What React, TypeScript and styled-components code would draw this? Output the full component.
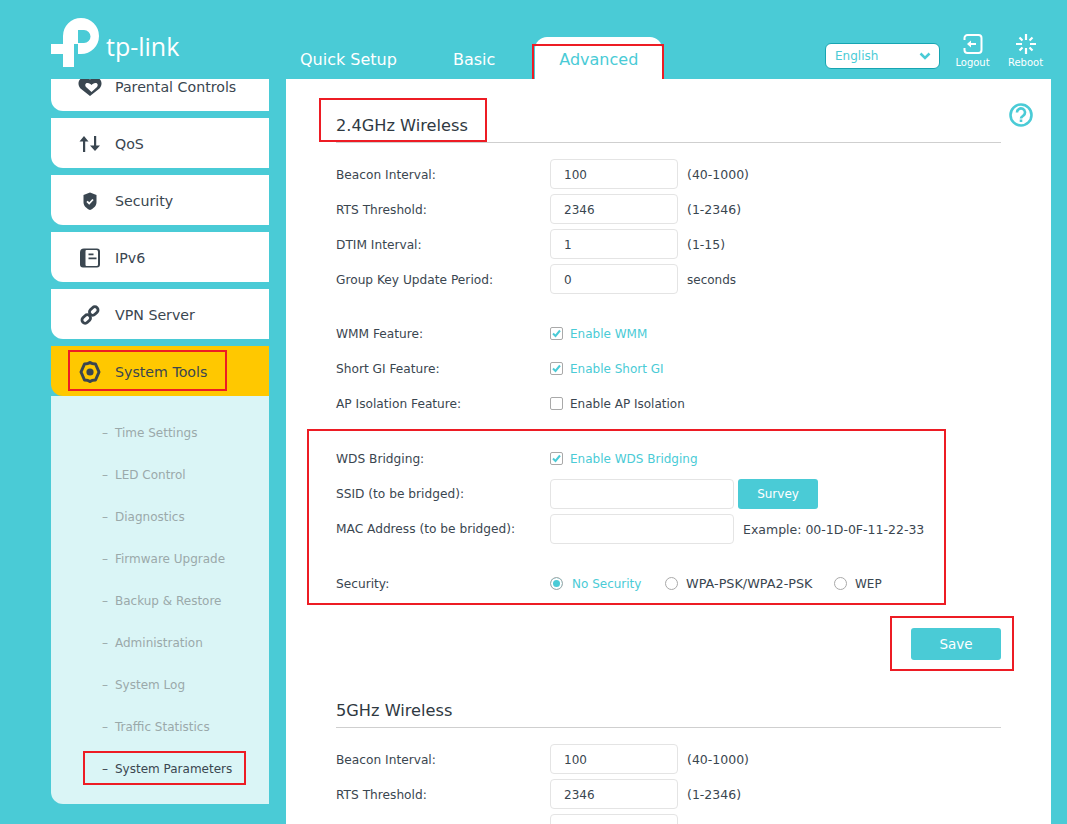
import React from 'react';
import styled, { createGlobalStyle } from 'styled-components';

const TEAL = '#4acbd6';
const INK = '#3a4650';

const GlobalStyle = createGlobalStyle`
  html, body, #root {
    margin: 0;
    height: 100%;
  }
  body {
    background: ${TEAL};
    font-family: "DejaVu Sans", Verdana, sans-serif;
    overflow: hidden;
  }
`;

const menu = ['Parental Controls', 'QoS', 'Security', 'IPv6', 'VPN Server'];
const subMenu = [
  'Time Settings',
  'LED Control',
  'Diagnostics',
  'Firmware Upgrade',
  'Backup & Restore',
  'Administration',
  'System Log',
  'Traffic Statistics',
  'System Parameters',
];

function MenuIcon({ name }: { name: string }) {
  switch (name) {
    case 'Parental Controls':
      return (
        <svg width="24" height="24" viewBox="0 0 24 24">
          <path fill={INK} d="M12 21 2.500 13.500C-.5 10.500 0 5.500 3 3.500c3-2 6-1 9 1 3-2 6-3 9-1 3 2 3.500 7 .5 10z" />
          <path fill="#fff" d="M13.500 17 8 12C6.500 10 7.500 8 9.500 8c2 0 3 1 4 2 1-1 2-2 4-2 2 0 3 2 1.500 4z" />
        </svg>
      );
    case 'QoS':
      return (
        <svg width="24" height="24" viewBox="0 0 24 24">
          <path fill={INK} d="M6 4 10.500 9.500H7.200V20H5V9.500H1.500z" />
          <path fill={INK} d="M16 4h2.200v9.500h3.800l-5 5.500-5-5.500h4z" />
        </svg>
      );
    case 'Security':
      return (
        <svg width="24" height="24" viewBox="0 0 24 24">
          <path fill={INK} d="M12 3.500 18.500 6v7c0 4-3 6.500-6.500 8-3.500-1.500-6.500-4-6.500-8V6z" />
          <path fill="none" stroke="#fff" strokeWidth="1.800" d="M9 12.300l2.200 2.200L15 10.500" />
        </svg>
      );
    case 'IPv6':
      return (
        <svg width="24" height="24" viewBox="0 0 24 24">
          <path fill={INK} d="M6 2.500h13a3 3 0 0 1 3 3v13a3 3 0 0 1-3 3H5a3 3 0 0 1-3-3V6.500a4 4 0 0 1 4-4z" />
          <path fill="#fff" d="M7.500 5a1 1 0 0 1 1-1h10a1.500 1.500 0 0 1 1.500 1.500v13a1.500 1.500 0 0 1-1.500 1.500h-10a1 1 0 0 1-1-1z" />
          <path fill={INK} d="M10.500 7.500h5v1.800h-5zM10.500 11.500h8v1.800h-8z" />
        </svg>
      );
    case 'VPN Server':
      return (
        <svg width="24" height="24" viewBox="0 0 24 24" fill="none" stroke={INK} strokeWidth="2.800">
          <rect x="3.500" y="12.800" width="9.500" height="6.400" rx="3.200" transform="rotate(-45 8.250 16)" />
          <rect x="11" y="4.800" width="9.500" height="6.400" rx="3.200" transform="rotate(-45 15.750 8)" />
        </svg>
      );
    default:
      return (
        <svg width="24" height="24" viewBox="0 0 24 24">
          <path fill="none" stroke={INK} strokeWidth="3" strokeLinejoin="round" d="M12 2.500c2 1.500 3 1.500 5.500 1.500L21 12l-3.500 8c-2.500 0-3.500 0-5.500 1.500-2-1.500-3-1.500-5.500-1.500L3 12l3.500-8C9 4 10 4 12 2.500z" />
          <circle cx="12" cy="12" r="3.600" fill={INK} />
        </svg>
      );
  }
}

function Check() {
  return (
    <svg width="9" height="9" viewBox="0 0 9 9">
      <path fill="none" stroke={TEAL} strokeWidth="2" d="M1 4.500 3.500 7 8 1.500" />
    </svg>
  );
}

function Field({ label, value, hint, hintSize }: { label: string; value: string; hint: string; hintSize?: number }) {
  return (
    <Row>
      <Label>{label}</Label>
      <TextInput defaultValue={value} />
      <Hint $size={hintSize}>{hint}</Hint>
    </Row>
  );
}

function Toggle({ label, text, on }: { label: string; text: string; on?: boolean }) {
  return (
    <Row>
      <Label>{label}</Label>
      <CheckBox>{on && <Check />}</CheckBox>
      <OptionText $on={on}>{text}</OptionText>
    </Row>
  );
}

function RadioOption({ text, on, width, size }: { text: string; on?: boolean; width: number; size?: number }) {
  return (
    <RadioWrap $width={width} $on={on}>
      <Radio $on={on} />
      <OptionText $on={on} $size={size}>{text}</OptionText>
    </RadioWrap>
  );
}

export default function App() {
  return (
    <Page>
      <GlobalStyle />
      <Header>
        <Logo>
          <svg width="50" height="51" viewBox="0 0 50 51">
            <path
              fill="#fff"
              fillRule="evenodd"
              d="M27 37h3A18 18 0 1 0 12 19v8H0v10h12v13h11V27h4zM27 13h6a6.500 6.500 0 0 1 0 13h-6z"
            />
          </svg>
          <LogoWord>tp-link</LogoWord>
        </Logo>
        <Tabs>
          <Tab>Quick Setup</Tab>
          <Tab>Basic</Tab>
          <Tab $active>
            Advanced
            <Mark $top={7} $left={-3} $width={132} $height={38} />
          </Tab>
        </Tabs>
        <Tools>
          <LangSelect>
            English
            <svg width="12" height="8" viewBox="0 0 12 8">
              <path fill="none" stroke={TEAL} strokeWidth="2.500" d="M1.500 1.500 6 6l4.500-4.500" />
            </svg>
          </LangSelect>
          <ToolButton>
            <svg width="20" height="20" viewBox="0 0 20 20" fill="none" stroke="#fff" strokeWidth="2">
              <path d="M1.500 6V4a3 3 0 0 1 3-3h11a3 3 0 0 1 3 3v12a3 3 0 0 1-3 3h-11a3 3 0 0 1-3-3v-2" />
              <path d="M13 10H8" />
              <path fill="#fff" stroke="none" d="M4 10l4-3.500v7z" />
            </svg>
            Logout
          </ToolButton>
          <ToolButton>
            <svg width="20" height="20" viewBox="0 0 20 20" fill="none" stroke="#fff" strokeWidth="2.200">
              <path d="M10 0v6M10 14v6M0 10h6M14 10h6M3.500 3.500l3 3M13.500 13.500l3 3M16.500 3.500l-3 3M6.500 13.500l-3 3" />
            </svg>
            Reboot
          </ToolButton>
        </Tools>
      </Header>
      <Body>
        <Sidebar>
          <MenuList>
            {menu.map((item) => (
              <MenuItem key={item}>
                <IconSlot>
                  <MenuIcon name={item} />
                </IconSlot>
                {item}
              </MenuItem>
            ))}
            <div>
              <MenuItem $active>
                <IconSlot>
                  <MenuIcon name="System Tools" />
                </IconSlot>
                System Tools
                <Mark $top={4} $left={17} $width={159} $height={41} />
              </MenuItem>
              <SubMenu>
                {subMenu.map((item) => {
                  const active = item === 'System Parameters';
                  return (
                    <SubItem key={item} $active={active}>
                      <Dash>–</Dash>
                      {item}
                      {active && <Mark $top={3} $left={32} $width={163} $height={34} />}
                    </SubItem>
                  );
                })}
              </SubMenu>
            </div>
          </MenuList>
        </Sidebar>
        <Main>
          <HelpIcon>
            <svg width="24" height="24" viewBox="0 0 24 24" fill="none" stroke={TEAL}>
              <circle cx="12" cy="12" r="10.500" strokeWidth="2.600" />
              <path strokeWidth="2.600" d="M8 9.500a4 4 0 1 1 6.500 3c-1.500 1.200-2.500 1.500-2.500 3" />
              <path strokeWidth="2.600" d="M12 16.500v2.500" />
            </svg>
          </HelpIcon>
          <SectionTitle>
            2.4GHz Wireless
            <Mark $top={19} $left={-17} $width={168} $height={44} />
          </SectionTitle>
          <Rows>
            <Field label="Beacon Interval:" value="100" hint="(40-1000)" />
            <Field label="RTS Threshold:" value="2346" hint="(1-2346)" />
            <Field label="DTIM Interval:" value="1" hint="(1-15)" />
            <Field label="Group Key Update Period:" value="0" hint="seconds" hintSize={12} />
          </Rows>
          <Rows $gap={19}>
            <Toggle label="WMM Feature:" text="Enable WMM" on />
            <Toggle label="Short GI Feature:" text="Enable Short GI" on />
            <Toggle label="AP Isolation Feature:" text="Enable AP Isolation" />
          </Rows>
          <BridgeGroup>
            <Mark $top={-12} $left={-29} $width={639} $height={176} />
            <Toggle label="WDS Bridging:" text="Enable WDS Bridging" on />
            <WideRow>
              <Label>SSID (to be bridged):</Label>
              <TextInput $wide />
              <SurveyButton>Survey</SurveyButton>
            </WideRow>
            <WideRow>
              <Label>MAC Address (to be bridged):</Label>
              <TextInput $wide />
              <Hint>Example: 00-1D-0F-11-22-33</Hint>
            </WideRow>
            <SecurityRow>
              <Label>Security:</Label>
              <RadioOption text="No Security" on width={115} />
              <RadioOption text="WPA-PSK/WPA2-PSK" width={169} size={12.8} />
              <RadioOption text="WEP" width={60} />
            </SecurityRow>
          </BridgeGroup>
          <SaveBar>
            <SaveButton>
              Save
              <Mark $top={-12} $left={-21} $width={124} $height={55} />
            </SaveButton>
          </SaveBar>
          <SectionTitle $second>5GHz Wireless</SectionTitle>
          <Rows>
            <Field label="Beacon Interval:" value="100" hint="(40-1000)" />
            <Field label="RTS Threshold:" value="2346" hint="(1-2346)" />
            <Row>
              <Label />
              <TextInput />
            </Row>
          </Rows>
        </Main>
      </Body>
    </Page>
  );
}

const Page = styled.div`
  height: 824px;
  overflow: hidden;
  display: flex;
  flex-direction: column;
`;

const Mark = styled.i<{ $top: number; $left: number; $width: number; $height: number }>`
  position: absolute;
  top: ${(p) => p.$top}px;
  left: ${(p) => p.$left}px;
  width: ${(p) => p.$width}px;
  height: ${(p) => p.$height}px;
  box-sizing: border-box;
  border: 2px solid #ed1c24;
  pointer-events: none;
`;

const Header = styled.header`
  height: 79px;
  flex: none;
  display: flex;
  align-items: flex-end;
  position: relative;
  padding: 0 15px 0 51px;
`;

const Logo = styled.div`
  width: 233px;
  align-self: flex-start;
  padding-top: 17px;
  display: flex;
  align-items: flex-start;
  color: #fff;
`;

const LogoWord = styled.span`
  font-family: "Open Sans", sans-serif;
  font-size: 25px;
  line-height: 30px;
  margin: 14px 0 0 5px;
`;

const Tabs = styled.nav`
  display: flex;
  gap: 24px;
`;

const Tab = styled.div<{ $active?: boolean }>`
  position: relative;
  height: 42px;
  line-height: 45px;
  padding: 0 ${(p) => (p.$active ? 24 : 16)}px;
  border-radius: 12px 12px 0 0;
  font-size: 16px;
  color: ${(p) => (p.$active ? TEAL : '#fff')};
  background: ${(p) => (p.$active ? '#fff' : 'transparent')};
`;

const Tools = styled.div`
  margin-left: auto;
  align-self: flex-start;
  padding-top: 34px;
  display: flex;
  align-items: flex-start;
`;

const LangSelect = styled.div`
  width: 115px;
  height: 26px;
  margin-top: 9px;
  margin-right: 6px;
  box-sizing: border-box;
  padding: 0 8px 0 9px;
  display: flex;
  align-items: center;
  justify-content: space-between;
  background: #fff;
  border: 1px solid #17a5b2;
  border-radius: 6px;
  color: ${TEAL};
  font-size: 12px;
`;

const ToolButton = styled.div`
  width: 53px;
  display: flex;
  flex-direction: column;
  align-items: center;
  gap: 3px;
  color: #fff;
  font-size: 10px;
`;

const Body = styled.div`
  flex: 1;
  display: flex;
  gap: 17px;
  padding-left: 51px;
  min-height: 0;
`;

const Sidebar = styled.aside`
  width: 218px;
  flex: none;
  overflow: hidden;
`;

const MenuList = styled.div`
  margin-top: -18px;
  display: flex;
  flex-direction: column;
  gap: 7px;
`;

const MenuItem = styled.div<{ $active?: boolean }>`
  position: relative;
  height: 50px;
  box-sizing: border-box;
  display: flex;
  align-items: center;
  padding: 2px 0 0 27px;
  border-radius: 0 0 0 12px;
  font-size: 14.200px;
  color: ${INK};
  background: ${(p) => (p.$active ? '#ffc800' : '#fff')};
`;

const IconSlot = styled.span`
  width: 24px;
  height: 24px;
  margin-right: 13px;
  display: flex;
`;

const SubMenu = styled.ul`
  list-style: none;
  margin: 0;
  padding: 16px 0 14px;
  background: #daf5f6;
  border-radius: 0 0 0 12px;
`;

const SubItem = styled.li<{ $active?: boolean }>`
  position: relative;
  height: 42px;
  display: flex;
  align-items: center;
  padding-left: 64px;
  font-size: 12px;
  color: ${(p) => (p.$active ? INK : '#9aa9aa')};
`;

const Dash = styled.span`
  position: absolute;
  left: 51px;
  font-size: 12px;
`;

const Main = styled.main`
  position: relative;
  width: 765px;
  flex: none;
  box-sizing: border-box;
  padding: 0 50px;
  background: #fff;
`;

const HelpIcon = styled.span`
  position: absolute;
  top: 24px;
  right: 18px;
  display: flex;
`;

const SectionTitle = styled.h2<{ $second?: boolean }>`
  position: relative;
  margin: ${(p) => (p.$second ? '36px' : '0')} 0 14px;
  padding-top: ${(p) => (p.$second ? '5px' : '37px')};
  height: 26px;
  line-height: 20px;
  border-bottom: 1px solid #cfcfcf;
  font-size: 16.200px;
  font-weight: 400;
  color: #2f3942;
`;

const Rows = styled.div<{ $gap?: number }>`
  margin-top: ${(p) => p.$gap ?? 0}px;
`;

const BridgeGroup = styled.section`
  position: relative;
  margin-top: 20px;
`;

const Row = styled.div`
  height: 35px;
  box-sizing: border-box;
  display: flex;
  align-items: center;
  font-size: 12px;
  color: ${INK};
`;

const WideRow = styled(Row)`
  padding-top: 1px;
`;

const SecurityRow = styled(Row)`
  margin-top: 20px;
`;

const Label = styled.span`
  width: 214px;
  flex: none;
  font-size: 12.200px;
`;

const TextInput = styled.input<{ $wide?: boolean }>`
  width: ${(p) => (p.$wide ? 184 : 128)}px;
  height: 30px;
  margin-bottom: ${(p) => (p.$wide ? 0 : 1)}px;
  box-sizing: border-box;
  padding: 2px 13px 0;
  border: 1px solid #e4e4e4;
  border-radius: 4px;
  outline: none;
  font: inherit;
  color: ${INK};
`;

const Hint = styled.span<{ $size?: number }>`
  margin-left: 9px;
  font-size: ${(p) => p.$size ?? 12.5}px;
`;

const SurveyButton = styled.button`
  width: 80px;
  height: 30px;
  margin-left: 4px;
  border: 0;
  border-radius: 3px;
  background: ${TEAL};
  color: #fff;
  font-family: inherit;
  font-size: 12px;
`;

const CheckBox = styled.span`
  width: 11px;
  height: 11px;
  display: flex;
  align-items: center;
  justify-content: center;
  border: 1px solid #a9a9a9;
  border-radius: 2px;
  margin-right: 7px;
`;

const OptionText = styled.span<{ $on?: boolean; $size?: number }>`
  color: ${(p) => (p.$on ? TEAL : INK)};
  font-size: ${(p) => p.$size ?? 12}px;
`;

const RadioWrap = styled.span<{ $width: number; $on?: boolean }>`
  width: ${(p) => p.$width}px;
  flex: none;
  display: flex;
  align-items: center;
  gap: ${(p) => (p.$on ? 9 : 8)}px;
`;

const Radio = styled.span<{ $on?: boolean }>`
  width: 11px;
  height: 11px;
  border-radius: 50%;
  border: 1px solid #a9a9a9;
  background: ${(p) => (p.$on ? TEAL : '#fff')};
  box-shadow: ${(p) => (p.$on ? 'inset 0 0 0 2px #fff' : 'none')};
`;

const SaveBar = styled.div`
  margin-top: 27px;
  display: flex;
  justify-content: flex-end;
`;

const SaveButton = styled.button`
  position: relative;
  width: 90px;
  height: 32px;
  border: 0;
  border-radius: 3px;
  background: ${TEAL};
  color: #fff;
  font-family: inherit;
  font-size: 13.500px;
`;
